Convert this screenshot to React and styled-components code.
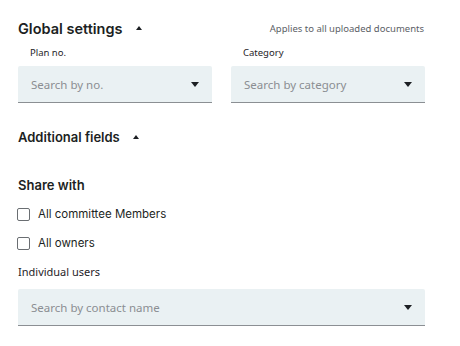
import React from "react";
import styled, { createGlobalStyle } from "styled-components";

const Global = createGlobalStyle`
  html, body { margin: 0; padding: 0; background: #fff; }
  body { font-family: "Noto Sans", sans-serif; color: #1f2328; }
`;

const Page = styled.div`
  width: 407px;
  padding: 18px 0 0 18px;
  display: flex;
  flex-direction: column;
`;

const HeaderRow = styled.div`
  display: flex;
  align-items: center;
  justify-content: space-between;
  height: 20px;
`;

const SectionTitle = styled.div`
  display: flex;
  align-items: center;
  gap: ${(p) => p.$gap || 14}px;
  font-family: Inter, sans-serif;
  font-weight: 600;
  font-size: ${(p) => p.$size || 14.5}px;
  color: #1c1f23;
`;

const Caret = styled.svg`
  width: 6px;
  height: 4px;
  fill: #1c1f23;
`;

const Hint = styled.span`
  font-size: 9.5px;
  color: #5b6066;
  margin-right: 1px;
`;

const FieldGrid = styled.div`
  display: grid;
  grid-template-columns: 194px 194px;
  column-gap: 19px;
  margin-top: 8px;
`;

const Field = styled.div`
  display: flex;
  flex-direction: column;
`;

const SmallLabel = styled.label`
  font-size: 9.5px;
  color: #1f2328;
  padding-left: 12px;
  height: 14px;
  line-height: 14px;
  margin-bottom: 6px;
`;

const Select = styled.div`
  background: #eaf1f3;
  border-bottom: 1px solid #8b8f93;
  display: flex;
  align-items: center;
  justify-content: space-between;
  padding: 0 13px;
  box-sizing: border-box;
  height: 37px;
  border-radius: 2px 2px 0 0;
`;

const Placeholder = styled.span`
  font-size: 11.5px;
  color: #8a8e92;
`;

const Down = styled.svg`
  width: 8px;
  height: 5px;
  fill: #1c1f23;
`;

const Spacer = styled.div`
  height: ${(p) => p.$h}px;
`;

const CheckRow = styled.label`
  display: flex;
  align-items: center;
  gap: 8px;
  height: 14px;
  font-family: Inter, sans-serif;
  font-size: 11.5px;
  color: #1c1f23;
`;

const Box = styled.span`
  width: 13px;
  height: 13px;
  box-sizing: border-box;
  border: 1.5px solid #6a6e72;
  border-radius: 2px;
  background: #fff;
  margin-left: -1px;
`;

const UsersLabel = styled.div`
  font-size: 11px;
  color: #1f2328;
  height: 16px;
  line-height: 16px;
`;

const CaretUp = () => (
  <Caret viewBox="0 0 6 4"><path d="M0 4 L3 0 L6 4 Z" /></Caret>
);
const CaretDown = () => (
  <Down viewBox="0 0 8 5"><path d="M0 0 L8 0 L4 5 Z" /></Down>
);

export default function App() {
  return (
    <>
      <Global />
      <Page>
        <HeaderRow>
          <SectionTitle>Global settings<CaretUp /></SectionTitle>
          <Hint>Applies to all uploaded documents</Hint>
        </HeaderRow>
        <FieldGrid>
          <Field>
            <SmallLabel>Plan no.</SmallLabel>
            <Select><Placeholder>Search by no.</Placeholder><CaretDown /></Select>
          </Field>
          <Field>
            <SmallLabel>Category</SmallLabel>
            <Select><Placeholder>Search by category</Placeholder><CaretDown /></Select>
          </Field>
        </FieldGrid>
        <Spacer $h={26} />
        <SectionTitle $size={13} $gap={13}>Additional fields<CaretUp /></SectionTitle>
        <Spacer $h={32} />
        <SectionTitle $size={13}>Share with</SectionTitle>
        <Spacer $h={14} />
        <CheckRow><Box />All committee Members</CheckRow>
        <Spacer $h={15} />
        <CheckRow><Box />All owners</CheckRow>
        <Spacer $h={14} />
        <UsersLabel>Individual users</UsersLabel>
        <Spacer $h={9} />
        <Select><Placeholder>Search by contact name</Placeholder><CaretDown /></Select>
      </Page>
    </>
  );
}
